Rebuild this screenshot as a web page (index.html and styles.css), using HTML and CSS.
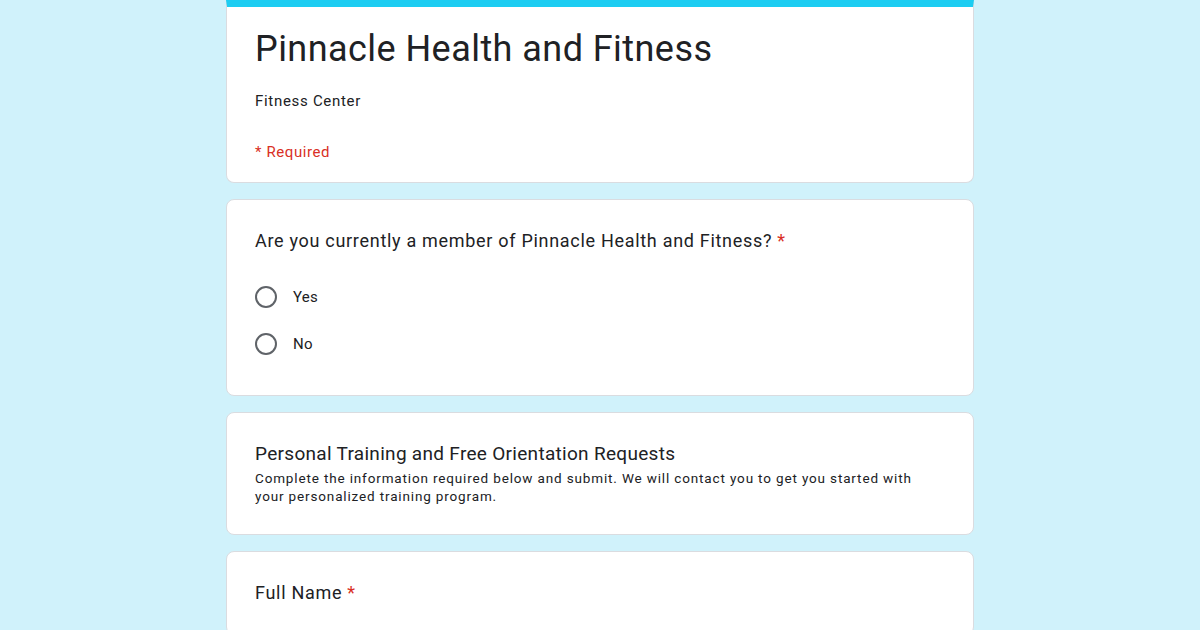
FILE: index.html
```html
<!DOCTYPE html>
<html lang="en">
<head>
    <meta charset="UTF-8">
    <meta name="viewport" content="width=device-width, initial-scale=1.0">
    <title>Pinnacle Health and Fitness</title>
    <link rel="stylesheet" href="styles.css">
</head>
<body>
    <div class="form">
        <div class="card header">
            <h1 class="title">Pinnacle Health and Fitness</h1>
            <p class="subtitle">Fitness Center</p>
            <p class="required-note">* Required</p>
        </div>

        <div class="card question-card">
            <p class="question">Are you currently a member of Pinnacle Health and Fitness? <span class="star">*</span></p>
            <ul class="choices">
                <li><span class="radio"></span>Yes</li>
                <li><span class="radio"></span>No</li>
            </ul>
        </div>

        <div class="card section">
            <h2 class="section-title">Personal Training and Free Orientation Requests</h2>
            <p class="section-desc">Complete the information required below and submit. We will contact you to get you started with your personalized training program.</p>
        </div>

        <div class="card question-card">
            <p class="question">Full Name <span class="star">*</span></p>
        </div>
    </div>
</body>
</html>
```

FILE: styles.css
```css
body {
    margin: 0;
    background: #d0f2fb;
    font-family: Roboto, "Noto Sans", Arial, sans-serif;
    color: #202124;
}
.form {
    width: 748px;
    margin: 0 auto;
    display: flex;
    flex-direction: column;
    gap: 16px;
}
.card {
    background: #fff;
    border: 1px solid #dadce0;
    border-radius: 8px;
    padding: 0 28px;
}
.header {
    border-top: 7px solid #1ccdf2;
    border-radius: 0 0 8px 8px;
    padding-top: 16px;
    padding-bottom: 20px;
}
.title {
    margin: 0;
    font-size: 36px;
    font-weight: 400;
    line-height: 52px;
    letter-spacing: 0.45px;
}
.subtitle {
    margin: 16px 0 0;
    font-size: 15px;
    line-height: 20px;
    letter-spacing: 0.7px;
}
.required-note {
    margin: 31px 0 0;
    font-size: 15px;
    line-height: 20px;
    letter-spacing: 0.6px;
    color: #d93025;
}
.question-card {
    padding-top: 28px;
    padding-bottom: 28px;
}
.question {
    margin: 0;
    font-size: 18px;
    line-height: 26px;
    letter-spacing: 0.7px;
}
.star {
    color: #d93025;
}
.choices {
    list-style: none;
    margin: 19px 0 0;
    padding: 0;
}
.choices li {
    display: flex;
    align-items: center;
    height: 47px;
    font-size: 15px;
    letter-spacing: 0.3px;
}
.radio {
    width: 18px;
    height: 18px;
    border: 2px solid #5f6368;
    border-radius: 50%;
    margin-right: 16px;
}
.section {
    padding-top: 28px;
    padding-bottom: 29px;
}
.section-title {
    margin: 0;
    font-size: 19px;
    font-weight: 400;
    line-height: 26px;
    letter-spacing: 0.3px;
}
.section-desc {
    margin: 2px 0 0;
    font-size: 13.5px;
    line-height: 18px;
    letter-spacing: 0.85px;
}
```
